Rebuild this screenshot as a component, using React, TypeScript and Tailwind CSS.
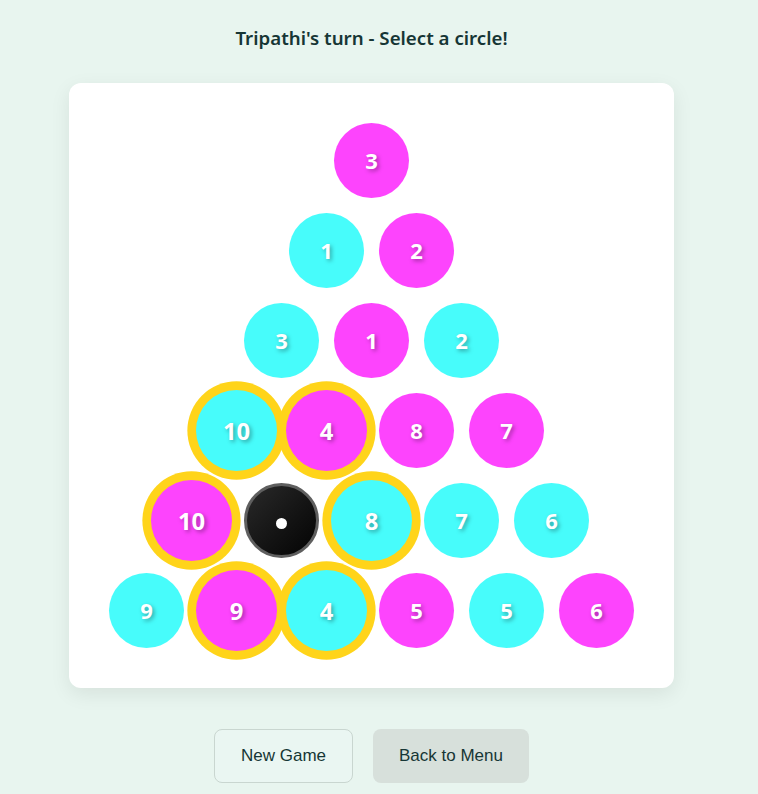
import React from "react";

type Cell = { n: number | null; c: "cyan" | "pink" | "black"; sel?: boolean };

const rows: Cell[][] = [
  [{ n: 3, c: "pink" }],
  [{ n: 1, c: "cyan" }, { n: 2, c: "pink" }],
  [{ n: 3, c: "cyan" }, { n: 1, c: "pink" }, { n: 2, c: "cyan" }],
  [
    { n: 10, c: "cyan", sel: true },
    { n: 4, c: "pink", sel: true },
    { n: 8, c: "pink" },
    { n: 7, c: "pink" },
  ],
  [
    { n: 10, c: "pink", sel: true },
    { n: null, c: "black" },
    { n: 8, c: "cyan", sel: true },
    { n: 7, c: "cyan" },
    { n: 6, c: "cyan" },
  ],
  [
    { n: 9, c: "cyan" },
    { n: 9, c: "pink", sel: true },
    { n: 4, c: "cyan", sel: true },
    { n: 5, c: "pink" },
    { n: 5, c: "cyan" },
    { n: 6, c: "pink" },
  ],
];

function Circle({ cell }: { cell: Cell }) {
  if (cell.c === "black") {
    return (
      <div className="w-[75px] h-[75px] rounded-full border-[3px] border-[#5f5f5f] bg-gradient-to-br from-[#2a2a2a] to-[#050505] flex items-center justify-center">
        <div className="w-[11px] h-[11px] rounded-full bg-white mt-[6px]" />
      </div>
    );
  }
  const bg = cell.c === "cyan" ? "bg-[#47fcfb]" : "bg-[#fd44fd]";
  return (
    <div
      className={`w-[75px] h-[75px] rounded-full flex items-center justify-center text-white text-[22px] font-bold cursor-pointer ${bg} ${
        cell.sel ? "scale-[1.08] ring-[8px] ring-[#ffd41a]" : ""
      }`}
      style={{ fontFamily: '"Open Sans", "Noto Sans", sans-serif', textShadow: "2px 2px 4px rgba(0,0,0,0.35)" }}
    >
      {cell.n}
    </div>
  );
}

export default function App() {
  // right padding stands in for the scrollbar gutter of the original page
  return (
    <div className="bg-[#e8f5ef] flex flex-col items-center pt-[25px] pb-[40px] pr-[15px]">
      <h2
        className="text-[18.7px] font-semibold text-[#163635] leading-[26px]"
        style={{ fontFamily: '"Noto Sans", "Open Sans", sans-serif' }}
      >
        Tripathi's turn - Select a circle!
      </h2>

      <div className="mt-[32px] bg-white rounded-xl p-10 shadow-[0_6px_20px_rgba(0,0,0,0.08)]">
        <div className="flex flex-col items-center gap-[15px] w-[525px]">
          {rows.map((row, i) => (
            <div key={i} className="flex gap-[15px]">
              {row.map((cell, j) => (
                <Circle key={j} cell={cell} />
              ))}
            </div>
          ))}
        </div>
      </div>

      <div
        className="flex gap-5 mt-[41px]"
        style={{ fontFamily: '"Liberation Sans", Arial, sans-serif' }}
      >
        <button className="px-[26px] py-4 leading-5 text-[17px] text-[#163635] rounded-lg border border-[#c9d6d0] bg-[#eaf6f2]">
          New Game
        </button>
        <button className="px-[26px] py-4 leading-5 text-[17px] text-[#163635] rounded-lg bg-[#d7e0db]">
          Back to Menu
        </button>
      </div>
    </div>
  );
}
